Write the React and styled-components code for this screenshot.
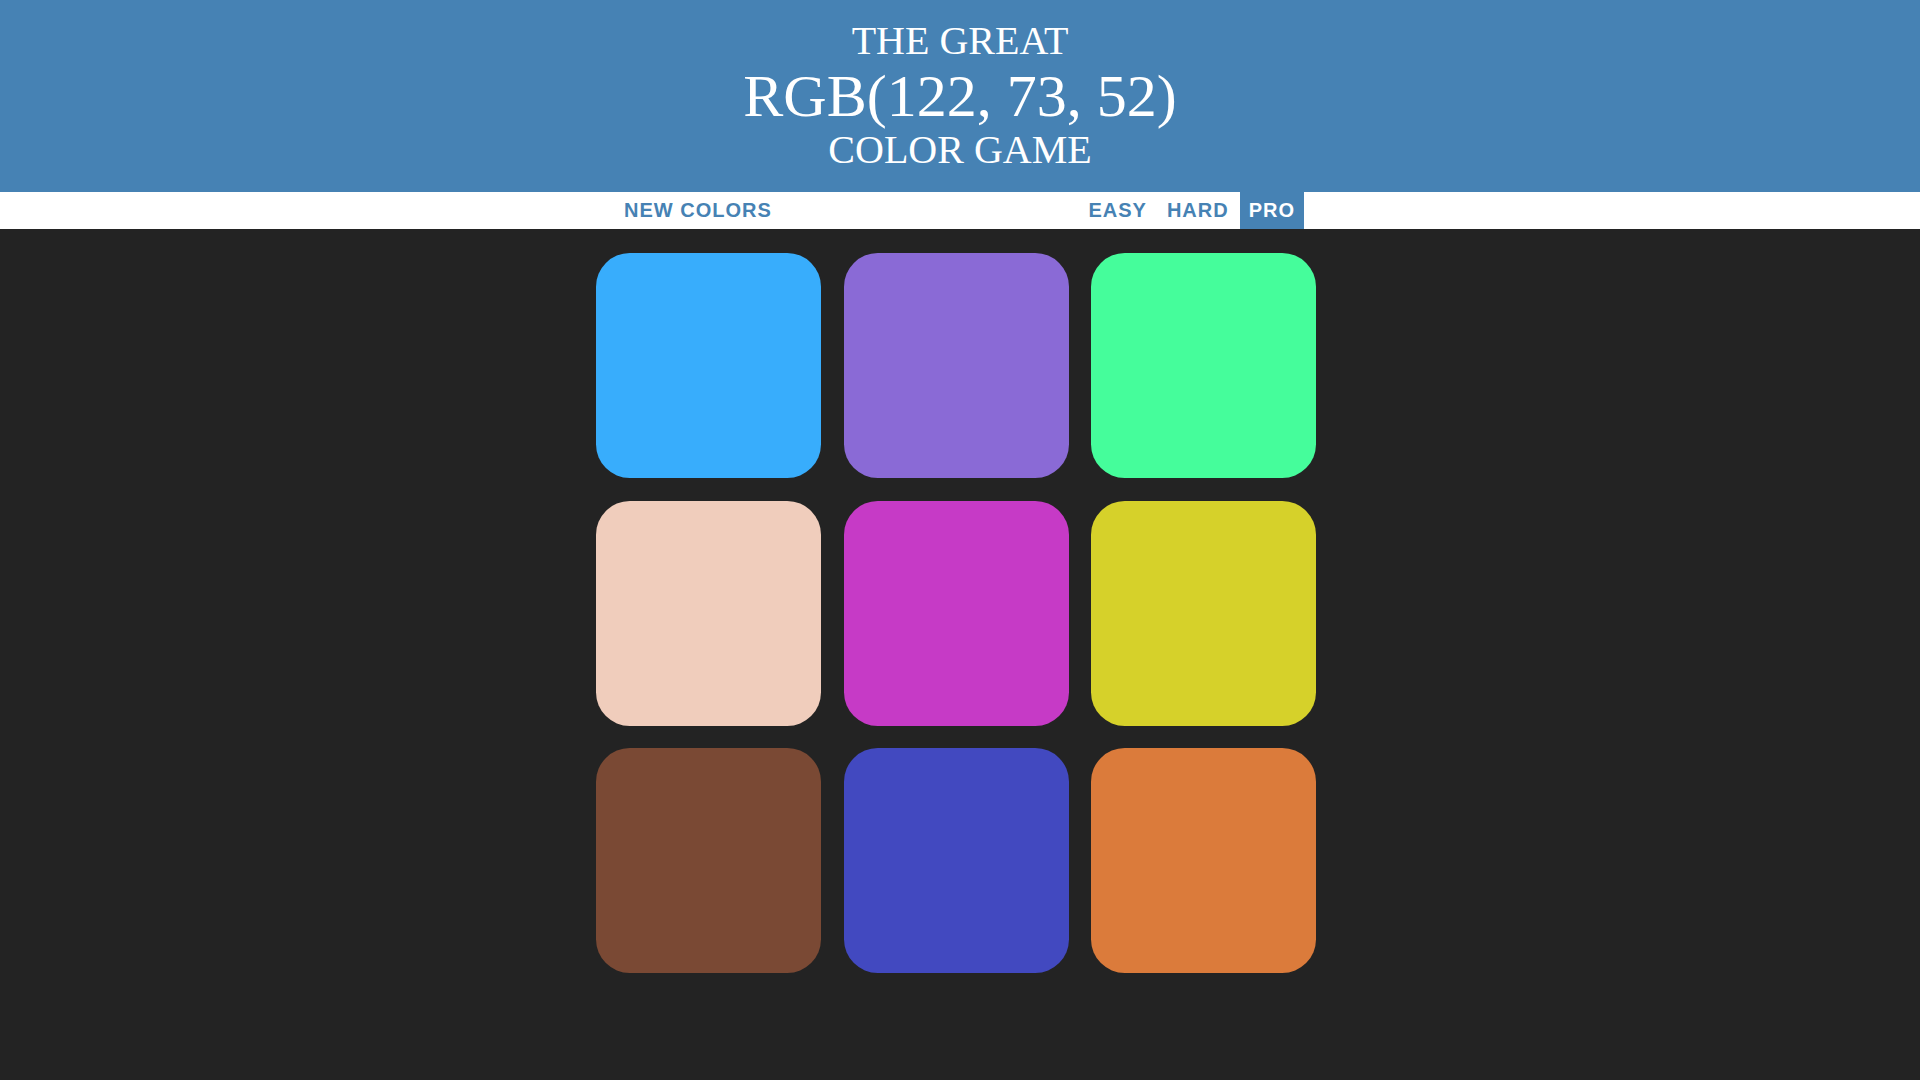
import React from "react";
import styled, { createGlobalStyle } from "styled-components";

const GlobalStyle = createGlobalStyle`
  html, body {
    margin: 0;
    padding: 0;
    background: #232323;
    min-height: 100%;
  }
  body {
    font-family: "Liberation Sans", Arial, sans-serif;
  }
`;

const Page = styled.div`
  min-height: 1080px;
  background: #232323;
`;

const Header = styled.h1`
  margin: 0;
  height: 192px;
  box-sizing: border-box;
  padding-top: 17px;
  background: #4682b4;
  color: #ffffff;
  text-align: center;
  font-family: "Liberation Serif", "Times New Roman", serif;
  font-weight: normal;
  text-transform: uppercase;
`;

const HeadLine = styled.span`
  display: block;
  font-size: ${(p) => p.$size}px;
  line-height: ${(p) => p.$lh}px;
`;

const Stripe = styled.div`
  background: #ffffff;
  height: 37px;
`;

const StripeInner = styled.div`
  width: 720px;
  height: 100%;
  margin-left: calc(50% - 364px);
  display: flex;
  align-items: stretch;
  padding-left: 19px;
  padding-right: 12px;
  box-sizing: border-box;
`;

const Button = styled.button`
  border: none;
  background: ${(p) => (p.$selected ? "#4682b4" : "transparent")};
  color: ${(p) => (p.$selected ? "#ffffff" : "#4682b4")};
  font-family: "Liberation Sans", Arial, sans-serif;
  font-weight: 700;
  font-size: 20px;
  letter-spacing: 1px;
  text-transform: uppercase;
  padding: 0 9px;
  margin: 0;
  height: 100%;
  cursor: pointer;
  outline: none;
`;

const Spacer = styled.div`
  flex: 1;
`;

const Modes = styled.div`
  display: flex;
  gap: 2px;
`;

const Board = styled.div`
  width: 720px;
  margin-left: calc(50% - 364px);
  padding-top: 24px;
  display: grid;
  grid-template-columns: repeat(3, 225px);
  column-gap: 22.5px;
  row-gap: 22.5px;
`;

const Square = styled.div`
  width: 225px;
  height: 225px;
  border-radius: 15%;
  background: ${(p) => p.$color};
`;

const colors = [
  "rgb(56, 173, 252)",
  "rgb(138, 106, 214)",
  "rgb(69, 253, 155)",
  "rgb(240, 205, 188)",
  "rgb(198, 58, 198)",
  "rgb(214, 209, 42)",
  "rgb(122, 73, 52)",
  "rgb(66, 73, 192)",
  "rgb(219, 123, 59)",
];

export default function App() {
  return (
    <Page>
      <GlobalStyle />
      <Header>
        <HeadLine $size={40} $lh={48}>The Great</HeadLine>
        <HeadLine $size={60} $lh={62}>RGB(122, 73, 52)</HeadLine>
        <HeadLine $size={40} $lh={46}>Color Game</HeadLine>
      </Header>
      <Stripe>
        <StripeInner>
          <Button>New Colors</Button>
          <Spacer />
          <Modes>
            <Button>Easy</Button>
            <Button>Hard</Button>
            <Button $selected>Pro</Button>
          </Modes>
        </StripeInner>
      </Stripe>
      <Board>
        {colors.map((c, i) => (
          <Square key={i} $color={c} />
        ))}
      </Board>
    </Page>
  );
}
